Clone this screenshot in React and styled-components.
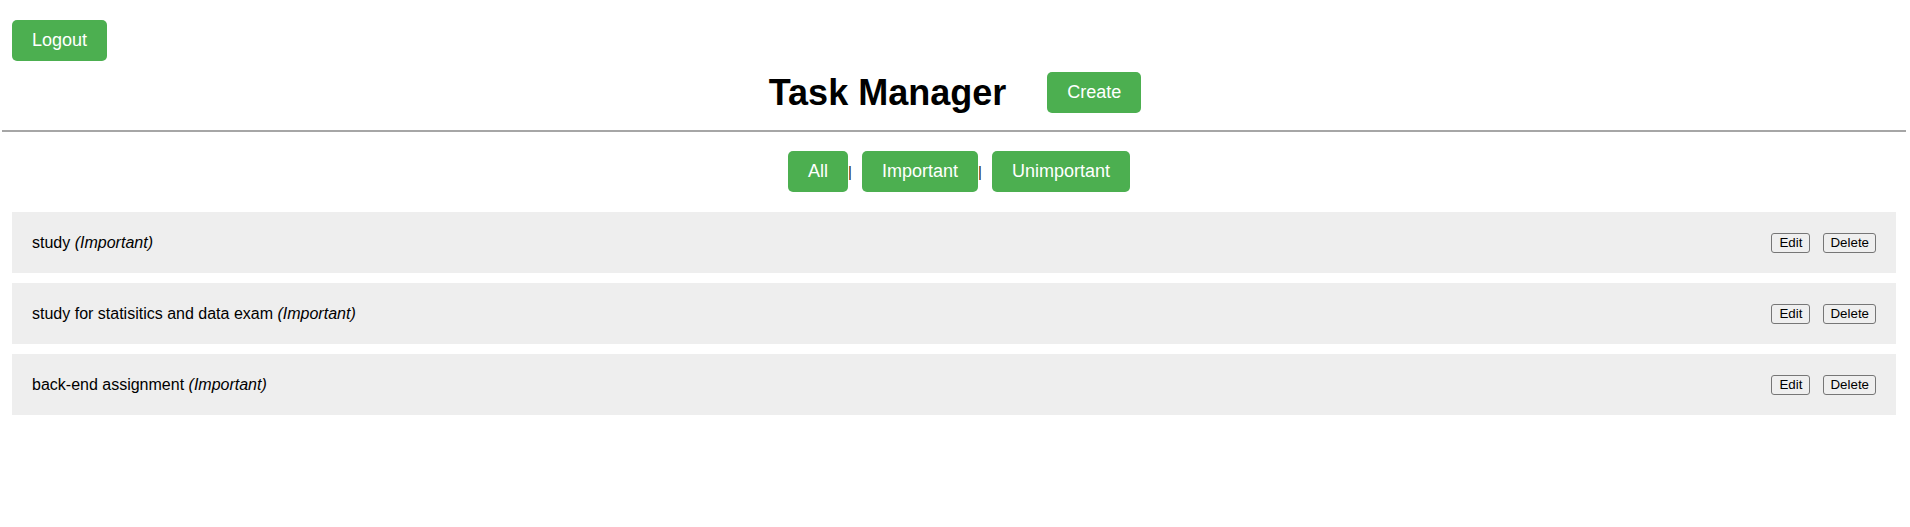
import React from "react";
import styled, { createGlobalStyle } from "styled-components";

const GlobalStyle = createGlobalStyle`
  body {
    margin: 0;
    background: #fff;
    font-family: "Liberation Sans", Arial, sans-serif;
    color: #000;
  }
`;

const tasks = [
  { id: 1, title: "study", important: true },
  { id: 2, title: "study for statisitics and data exam", important: true },
  { id: 3, title: "back-end assignment", important: true },
];

const filters = ["All", "Important", "Unimportant"];

const App = () => {
  return (
    <Page>
      <GlobalStyle />
      <TopBar>
        <GreenButton>Logout</GreenButton>
      </TopBar>
      <Header>
        <Title>Task Manager</Title>
        <GreenButton>Create</GreenButton>
      </Header>
      <Divider />
      <Filters>
        {filters.map((f, i) => (
          <React.Fragment key={f}>
            <GreenButton>{f}</GreenButton>
            {i < filters.length - 1 && <Pipe>|</Pipe>}
          </React.Fragment>
        ))}
      </Filters>
      <TaskList>
        {tasks.map((t) => (
          <TaskRow key={t.id}>
            <TaskText>
              {t.title} <em>({t.important ? "Important" : "Unimportant"})</em>
            </TaskText>
            <Actions>
              <SmallButton>Edit</SmallButton>
              <SmallButton>Delete</SmallButton>
            </Actions>
          </TaskRow>
        ))}
      </TaskList>
    </Page>
  );
};

export default App;

const Page = styled.div`
  padding-top: 20px;
  min-height: 527px;
  box-sizing: border-box;
`;

const TopBar = styled.div`
  display: flex;
  padding: 0 12px;
`;

const GreenButton = styled.button`
  background: #4caf50;
  color: #fff;
  border: none;
  border-radius: 5px;
  padding: 0 20px;
  height: 41px;
  font-family: "Liberation Sans", Arial, sans-serif;
  font-size: 18px;
  cursor: pointer;
`;

const Header = styled.div`
  display: flex;
  justify-content: center;
  align-items: center;
  gap: 41px;
  margin-top: 11px;
`;

const Title = styled.h1`
  margin: 0;
  font-size: 36px;
  line-height: 41px;
  font-weight: bold;
`;

const Divider = styled.hr`
  border: none;
  border-top: 2px solid #a6a6a6;
  height: 0;
  margin: 17px 4px 0 2px;
`;

const Filters = styled.div`
  display: flex;
  justify-content: center;
  align-items: center;
  padding-left: 8px;
  margin-top: 19px;
`;

const Pipe = styled.span`
  font-size: 15px;
  line-height: 15px;
  margin-right: 10px;
  color: #222;
`;

const TaskList = styled.div`
  display: flex;
  flex-direction: column;
  gap: 10px;
  padding: 0 14px 0 12px;
  margin-top: 20px;
`;

const TaskRow = styled.div`
  display: flex;
  justify-content: space-between;
  align-items: center;
  height: 61px;
  box-sizing: border-box;
  padding: 0 20px;
  background: #eeeeee;
`;

const TaskText = styled.span`
  font-size: 16px;

  em {
    font-style: italic;
  }
`;

const Actions = styled.div`
  display: flex;
  gap: 13px;
`;

const SmallButton = styled.button`
  font-family: "Liberation Sans", Arial, sans-serif;
  font-size: 13.333px;
  padding: 1px 6px;
  min-width: 39px;
  height: 20px;
  background: #efefef;
  border: 1px solid #767676;
  border-radius: 3px;
  color: #000;
  cursor: pointer;
`;
